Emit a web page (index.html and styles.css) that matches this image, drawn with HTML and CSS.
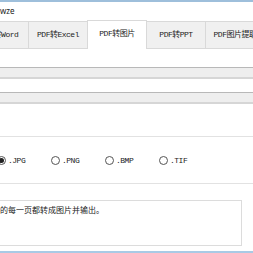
FILE: index.html
```html
<!DOCTYPE html>
<html lang="zh">
<head>
    <meta charset="UTF-8">
    <meta name="viewport" content="width=device-width, initial-scale=1.0">
    <title>pdfwze</title>
    <link rel="stylesheet" href="styles.css">
</head>
<body>
    <div class="window">
        <div class="titlebar">wze</div>

        <div class="tabs">
            <div class="tab">PDF转Word</div>
            <div class="tab">PDF转Excel</div>
            <div class="tab active">PDF转图片</div>
            <div class="tab">PDF转PPT</div>
            <div class="tab">PDF图片提取</div>
        </div>

        <div class="panel">
            <div class="bar bar-first"></div>
            <div class="bar bar-second"></div>

            <div class="group">
                <label class="radio checked"><span class="dot"></span>.JPG</label>
                <label class="radio"><span class="dot"></span>.PNG</label>
                <label class="radio"><span class="dot"></span>.BMP</label>
                <label class="radio"><span class="dot"></span>.TIF</label>
            </div>

            <div class="output">的每一页都转成图片并输出。</div>
        </div>
    </div>
</body>
</html>
```

FILE: styles.css
```css
html, body { margin: 0; padding: 0; background: #fff; overflow: hidden; }
.window { width: 253px; height: 253px; box-sizing: border-box; border-top: 2px solid #9ebfdb; border-bottom: 2px solid #a9cae5; display: flex; flex-direction: column; overflow: hidden; color: #222; }
.titlebar { height: 18px; line-height: 18px; font-family: "Noto Sans", sans-serif; font-size: 8px; color: #222; }

.tabs { display: flex; align-items: flex-end; height: 28px; margin-left: -30px; border-bottom: 1px solid #d9d9d9; flex-shrink: 0; }
.tab { width: 59px; height: 27px; box-sizing: border-box; flex-shrink: 0; background: #f0f0f0; border: 1px solid #d9d9d9; border-left: none; border-bottom: none; text-align: center; line-height: 26px; font-family: "Liberation Mono", "Noto Sans CJK SC", monospace; font-size: 8px; letter-spacing: -0.5px; color: #222; white-space: nowrap; overflow: hidden; }
.tab:first-child { border-left: 1px solid #d9d9d9; }
.tab.active { height: 29px; margin-bottom: -1px; background: #fff; border-left: 1px solid #d9d9d9; margin-left: -1px; width: 60px; line-height: 25px; position: relative; z-index: 1; }

.panel { display: flex; flex-direction: column; }
.bar { height: 12px; box-sizing: border-box; background: #eeeeee; border-top: 1px solid #b8b8b8; border-bottom: 2px solid #d6d6d6; }
.bar-first { margin-top: 18px; }
.bar-second { margin-top: 13px; }

.group { margin-top: 32px; height: 48px; box-sizing: border-box; border-top: 1px solid #e2e2e2; border-bottom: 1px solid #e2e2e2; display: flex; align-items: center; margin-left: -3px; }
.radio { width: 54px; display: flex; align-items: center; gap: 2px; font-family: "Liberation Mono", monospace; font-size: 8px; letter-spacing: -0.5px; color: #222; }
.dot { width: 9px; height: 9px; box-sizing: border-box; border: 1px solid #555; border-radius: 50%; background: #fff; position: relative; }
.radio.checked .dot::after { content: ""; position: absolute; left: 1px; top: 1px; width: 5px; height: 5px; border-radius: 50%; background: #222; }

.output { margin-top: 16px; margin-left: -10px; margin-right: 11px; height: 46px; box-sizing: border-box; border: 1px solid #dcdcdc; padding: 3px 0 0 9px; font-family: "Noto Sans CJK SC", sans-serif; font-size: 8px; line-height: 12px; color: #222; }
```
